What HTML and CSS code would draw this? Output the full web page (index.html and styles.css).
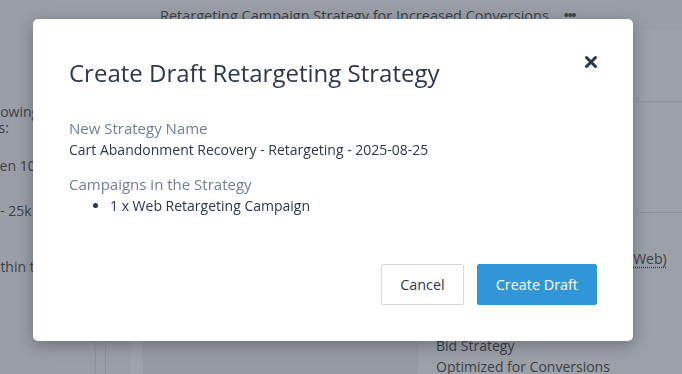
FILE: index.html
```
<!DOCTYPE html>
<html>
<head>
    <title>Create Draft Retargeting Strategy</title>
    <link rel="stylesheet" href="styles.css">
</head>
<body>
    <div class="page">
        <div class="topbar">
            <span class="topbar-title">Retargeting Campaign Strategy for Increased Conversions</span>
            <span class="dots">&bull;&bull;&bull;</span>
        </div>
        <div class="columns">
            <div class="sidebar">
                <p class="side-line l1">following</p>
                <p class="side-line l2">ns:</p>
                <p class="side-line l3">Between 10</p>
                <p class="side-line l4">10k - 25k</p>
                <p class="side-line l5">within th</p>
            </div>
            <div class="strip strip-a"></div>
            <div class="strip strip-b"></div>
            <div class="strip strip-c"></div>
            <div class="main"></div>
            <div class="panel">
                <div class="panel-row row-top"></div>
                <div class="panel-row row-mid"></div>
                <div class="panel-row row-bid">
                    <div class="channel-line"><span class="channel">(Web)</span></div>
                    <div class="panel-label">Bid Strategy</div>
                    <div class="panel-value">Optimized for Conversions</div>
                </div>
            </div>
        </div>
    </div>

    <div class="modal">
        <button class="close" aria-label="Close">
            <svg width="14" height="14" viewBox="0 0 14 14">
                <path d="M2.5 2.5 L11.5 11.5 M11.5 2.5 L2.5 11.5" stroke="#2d3748" stroke-width="3" stroke-linecap="round"/>
            </svg>
        </button>
        <h1>Create Draft Retargeting Strategy</h1>

        <div class="field">
            <div class="label">New Strategy Name</div>
            <div class="value">Cart Abandonment Recovery - Retargeting - 2025-08-25</div>
        </div>

        <div class="field">
            <div class="label">Campaigns in the Strategy</div>
            <ul class="campaigns">
                <li>1 x Web Retargeting Campaign</li>
            </ul>
        </div>

        <div class="actions">
            <button class="btn btn-cancel">Cancel</button>
            <button class="btn btn-primary">Create Draft</button>
        </div>
    </div>
</body>
</html>
```

FILE: styles.css
```
body {
    margin: 0;
    padding: 0;
    font-family: "Open Sans", "Liberation Sans", sans-serif;
    background: #9a9fa7;
    overflow: hidden;
}

.page {
    width: 682px;
    height: 374px;
    display: flex;
    flex-direction: column;
    background: #9a9fa7;
    color: #3d424a;
    overflow: hidden;
}

.topbar {
    flex: 0 0 30px;
    display: flex;
    align-items: center;
    padding-left: 160px;
    gap: 15px;
    font-size: 14.5px;
    color: #3a3f47;
}

.dots {
    font-size: 13px;
    font-weight: 700;
    letter-spacing: -1px;
}

.columns {
    flex: 1;
    min-height: 0;
    display: flex;
}

.sidebar {
    width: 95px;
    overflow: hidden;
    border-right: 1px solid #8f949c;
    padding-top: 74px;
}

.side-line {
    margin: 0;
    font-size: 14px;
    line-height: 16px;
    white-space: nowrap;
}

.l1 { margin-left: -20px; }
.l2 { margin-left: -10px; }
.l3 { margin-top: 22px; margin-left: -41px; }
.l4 { margin-top: 29px; margin-left: -27px; }
.l5 { margin-top: 40px; margin-left: -14px; }

.strip-a {
    width: 9px;
    border-right: 1px solid #8f949c;
}

.strip-b {
    width: 24px;
}

.strip-c {
    width: 13px;
    background: #9ea3aa;
}

.main {
    flex: 0 0 275px;
    background: #969ba3;
}

.panel {
    flex: 1;
    display: flex;
    flex-direction: column;
    overflow: hidden;
    background: #9ca1a8;
}

.panel-row {
    flex-shrink: 0;
    border-bottom: 1px solid #8e939b;
}

.row-top {
    height: 71px;
}

.row-mid {
    height: 110px;
}

.row-bid {
    border-bottom: none;
    padding: 35px 0 0 18px;
    font-size: 14px;
    line-height: 21px;
    color: #3a3f47;
}

.channel-line {
    padding-left: 193px;
    margin-bottom: 66px;
}

.channel {
    text-decoration: underline dotted;
    text-underline-offset: 3px;
}

.modal {
    position: fixed;
    left: 33px;
    top: 19px;
    width: 600px;
    height: 322px;
    box-sizing: border-box;
    padding: 37px 36px 0 36px;
    background: #fff;
    border-radius: 5px;
    box-shadow: 0 4px 16px rgba(20, 25, 35, 0.35);
}

.modal h1 {
    margin: 0 0 27px 0;
    font-size: 24px;
    font-weight: 400;
    line-height: 34px;
    color: #2d3748;
}

.close {
    position: absolute;
    top: 36px;
    right: 35px;
    padding: 0;
    border: none;
    background: none;
    width: 14px;
    height: 14px;
    cursor: pointer;
}

.close svg {
    display: block;
}

.field {
    margin-bottom: 12px;
}

.label {
    font-size: 15px;
    line-height: 22px;
    color: #718096;
}

.value {
    font-size: 14px;
    line-height: 22px;
    color: #2d3748;
}

.campaigns {
    margin: 0;
    padding-left: 41px;
    font-size: 14px;
    line-height: 22px;
    color: #2d3748;
}

.actions {
    position: absolute;
    right: 36px;
    bottom: 36px;
    display: flex;
    gap: 13px;
}

.btn {
    height: 41px;
    padding: 0 18px;
    font-family: "Open Sans", "Liberation Sans", sans-serif;
    font-size: 14.4px;
    border-radius: 2px;
    cursor: pointer;
}

.btn-cancel {
    background: #fff;
    color: #2d3748;
    border: 1px solid #d5d9de;
}

.btn-primary {
    background: #3096d8;
    color: #fff;
    border: 1px solid #3096d8;
}
```
